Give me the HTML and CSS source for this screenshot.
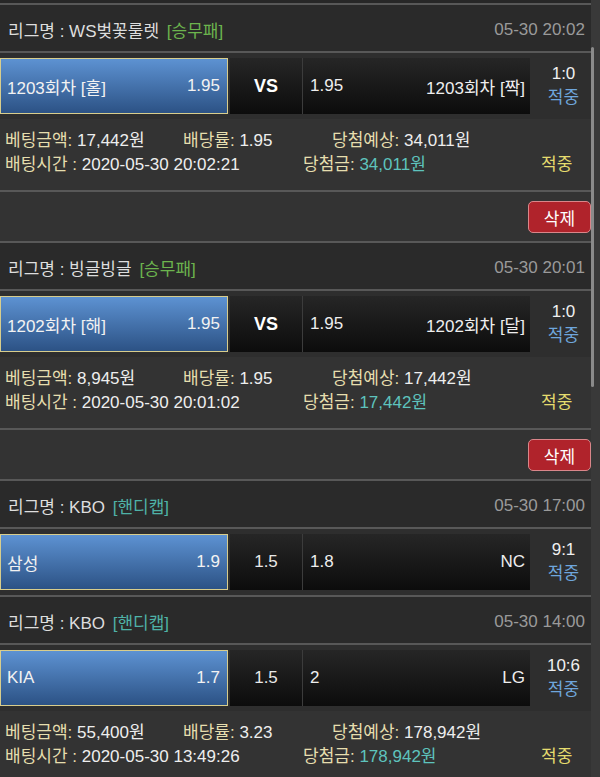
FILE: index.html
```html
<!DOCTYPE html>
<html lang="ko">
<head>
    <meta charset="UTF-8">
    <meta name="viewport" content="width=device-width, initial-scale=1.0">
    <title>베팅내역</title>
    <link rel="stylesheet" href="styles.css">
</head>
<body>
    <div class="page">
        <div class="prev-tail"></div>

        <!-- slip 1 -->
        <div class="slip">
            <div class="game">
                <div class="game-head">
                    <span class="league">리그명 : WS벚꽃룰렛 <span class="type wdl">[승무패]</span></span>
                    <span class="time">05-30 20:02</span>
                </div>
                <div class="bet-row">
                    <div class="pick home selected"><span>1203회차 [홀]</span><span>1.95</span></div>
                    <div class="mid vs">VS</div>
                    <div class="pick away"><span>1.95</span><span>1203회차 [짝]</span></div>
                    <div class="result"><span class="score">1:0</span><span class="hit">적중</span></div>
                </div>
            </div>
            <div class="slip-info">
                <div class="info-line">
                    <span class="c1"><span class="lbl">베팅금액:</span> 17,442원</span>
                    <span class="c2"><span class="lbl">배당률:</span> 1.95</span>
                    <span class="c3"><span class="lbl">당첨예상:</span> 34,011원</span>
                </div>
                <div class="info-line">
                    <span class="c1 wide"><span class="lbl">배팅시간 :</span> 2020-05-30 20:02:21</span>
                    <span class="c4"><span class="lbl">당첨금:</span> <span class="won">34,011원</span></span>
                    <span class="status">적중</span>
                </div>
            </div>
        </div>
        <div class="actions"><button class="btn-delete">삭제</button></div>

        <!-- slip 2 -->
        <div class="slip">
            <div class="game">
                <div class="game-head">
                    <span class="league">리그명 : 빙글빙글 <span class="type wdl">[승무패]</span></span>
                    <span class="time">05-30 20:01</span>
                </div>
                <div class="bet-row">
                    <div class="pick home selected"><span>1202회차 [해]</span><span>1.95</span></div>
                    <div class="mid vs">VS</div>
                    <div class="pick away"><span>1.95</span><span>1202회차 [달]</span></div>
                    <div class="result"><span class="score">1:0</span><span class="hit">적중</span></div>
                </div>
            </div>
            <div class="slip-info">
                <div class="info-line">
                    <span class="c1"><span class="lbl">베팅금액:</span> 8,945원</span>
                    <span class="c2"><span class="lbl">배당률:</span> 1.95</span>
                    <span class="c3"><span class="lbl">당첨예상:</span> 17,442원</span>
                </div>
                <div class="info-line">
                    <span class="c1 wide"><span class="lbl">배팅시간 :</span> 2020-05-30 20:01:02</span>
                    <span class="c4"><span class="lbl">당첨금:</span> <span class="won">17,442원</span></span>
                    <span class="status">적중</span>
                </div>
            </div>
        </div>
        <div class="actions"><button class="btn-delete">삭제</button></div>

        <!-- slip 3 -->
        <div class="slip">
            <div class="game">
                <div class="game-head">
                    <span class="league">리그명 : KBO <span class="type handicap">[핸디캡]</span></span>
                    <span class="time">05-30 17:00</span>
                </div>
                <div class="bet-row">
                    <div class="pick home selected"><span>삼성</span><span>1.9</span></div>
                    <div class="mid">1.5</div>
                    <div class="pick away"><span>1.8</span><span>NC</span></div>
                    <div class="result"><span class="score">9:1</span><span class="hit">적중</span></div>
                </div>
            </div>
            <div class="game">
                <div class="game-head">
                    <span class="league">리그명 : KBO <span class="type handicap">[핸디캡]</span></span>
                    <span class="time">05-30 14:00</span>
                </div>
                <div class="bet-row">
                    <div class="pick home selected"><span>KIA</span><span>1.7</span></div>
                    <div class="mid">1.5</div>
                    <div class="pick away"><span>2</span><span>LG</span></div>
                    <div class="result"><span class="score">10:6</span><span class="hit">적중</span></div>
                </div>
            </div>
            <div class="slip-info">
                <div class="info-line">
                    <span class="c1"><span class="lbl">베팅금액:</span> 55,400원</span>
                    <span class="c2"><span class="lbl">배당률:</span> 3.23</span>
                    <span class="c3"><span class="lbl">당첨예상:</span> 178,942원</span>
                </div>
                <div class="info-line">
                    <span class="c1 wide"><span class="lbl">배팅시간 :</span> 2020-05-30 13:49:26</span>
                    <span class="c4"><span class="lbl">당첨금:</span> <span class="won">178,942원</span></span>
                    <span class="status">적중</span>
                </div>
            </div>
        </div>
    </div>
    <div class="scroll-thumb"></div>
</body>
</html>
```

FILE: styles.css
```css
body {
    margin: 0;
    background-color: #393939;
    font-family: 'Liberation Sans', 'Noto Sans CJK KR', sans-serif;
    font-size: 17px;
    color: #e6e6e6;
    height: 777px;
    overflow: hidden;
}
.page {
    width: 591px;
    background-color: #333;
}
.prev-tail {
    height: 3px;
    background-color: #272727;
}
.game {
    border-top: 2px solid #585858;
}
.game-head {
    height: 48px;
    box-sizing: border-box;
    background-color: #2a2a2a;
    border-bottom: 2px solid #585858;
    display: flex;
    justify-content: space-between;
    align-items: center;
    padding: 3px 6px 0 8px;
}
.league {
    color: #dedede;
}
.type {
    margin-left: 3px;
}
.wdl {
    color: #6cb44e;
}
.handicap {
    color: #4fb2a7;
}
.time {
    color: #9a9a9a;
}
.bet-row {
    display: flex;
    padding: 5px 0;
    background-color: #2e2e2e;
}
.pick {
    width: 228px;
    height: 56px;
    box-sizing: border-box;
    display: flex;
    justify-content: space-between;
    align-items: center;
    background: linear-gradient(#262626, #0c0c0c);
    color: #eee;
}
.pick.home {
    padding: 0 7px 0 6px;
}
.pick.away {
    padding: 0 5px 0 7px;
    border-left: 1px solid #3c3c3c;
}
.pick.selected {
    background: linear-gradient(#5d92d2, #2c5285);
    border: 1px solid #d8cd8c;
    color: #f2f2f2;
}
.mid {
    width: 72px;
    height: 56px;
    margin-left: 2px;
    display: flex;
    align-items: center;
    justify-content: center;
    background: linear-gradient(#262626, #0c0c0c);
    color: #e8e8e8;
}
.vs {
    font-weight: bold;
    font-size: 18px;
    color: #fff;
}
.result {
    flex: 1;
    padding-left: 6px;
    display: flex;
    flex-direction: column;
    align-items: center;
    justify-content: center;
    line-height: 24px;
}
.score {
    color: #f0f0f0;
}
.hit {
    color: #6ea6dc;
}
.slip-info {
    padding: 7px 0 16px 5px;
    border-bottom: 2px solid #585858;
}
.info-line {
    display: flex;
    height: 24px;
    align-items: center;
    color: #eee;
}
.lbl {
    color: #e6deae;
}
.c1 {
    width: 178px;
}
.c1.wide {
    width: 298px;
}
.c2 {
    width: 149px;
}
.c4 {
    width: 238px;
}
.won {
    color: #5ec3bd;
}
.status {
    color: #e5dc6e;
}
.actions {
    height: 49px;
    box-sizing: border-box;
    padding-top: 9px;
    display: flex;
    justify-content: flex-end;
}
.btn-delete {
    width: 63px;
    height: 32px;
    background-color: #b0232b;
    border: 1px solid #d9868a;
    border-radius: 5px;
    color: #fff;
    font-family: 'Liberation Sans', 'Noto Sans CJK KR', sans-serif;
    font-size: 17px;
    padding: 0;
}
.scroll-thumb {
    position: absolute;
    left: 591px;
    top: 47px;
    width: 3px;
    height: 340px;
    border-radius: 2px;
    background-color: #8a8a8a;
}
```
